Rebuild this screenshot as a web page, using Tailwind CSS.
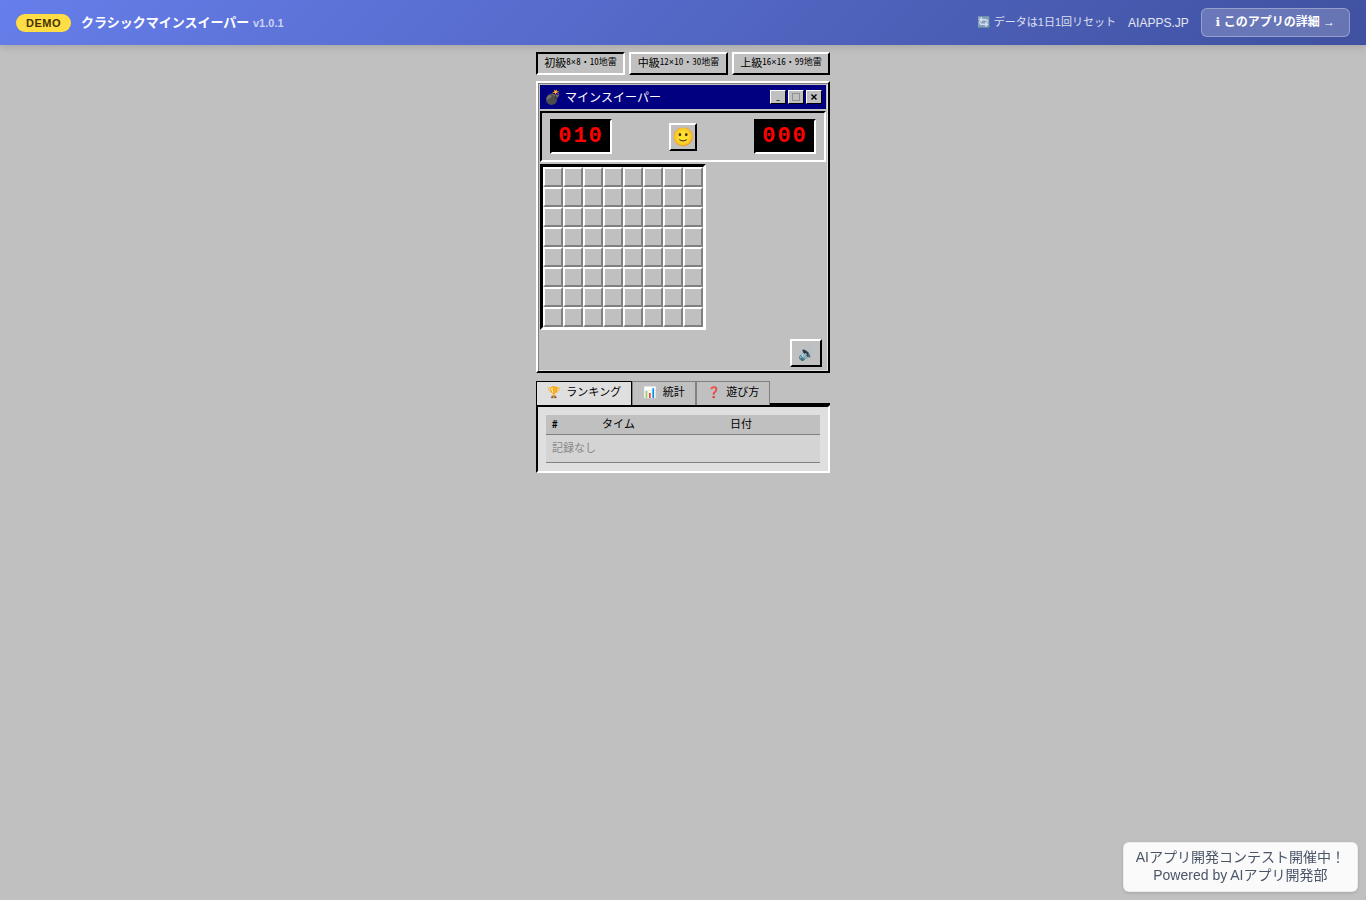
<!DOCTYPE html>
<html lang="ja">
<head>
  <meta charset="UTF-8">
  <meta name="viewport" content="width=device-width, initial-scale=1.0">
  <title>クラシックマインスイーパー</title>
  <script src="https://cdn.jsdelivr.net/npm/@tailwindcss/browser@4"></script>
</head>
<body class="min-h-screen bg-[#c0c0c0] text-black font-['Noto_Sans_Mono_CJK_JP','Noto_Sans_CJK_JP',monospace]">

  <header class="flex h-[45px] items-center justify-between bg-linear-135 from-[#667eea] to-[#4051a0] px-4 text-white shadow-[0_2px_8px_rgba(0,0,0,0.15)] font-['Liberation_Sans','Noto_Sans_CJK_JP',sans-serif]">
    <div class="flex items-center gap-[10px]">
      <span class="rounded-full bg-[#ffdd44] px-[10px] text-[11px] leading-[18px] font-bold tracking-[0.5px] text-[#443300]">DEMO</span>
      <h1 class="text-[13px] font-bold">クラシックマインスイーパー <span class="text-[11px] text-white/70">v1.0.1</span></h1>
    </div>
    <div class="flex items-center gap-3">
      <span class="text-[11px] opacity-80">🔄 データは1日1回リセット</span>
      <a href="#" class="text-xs text-white/85">AIAPPS.JP</a>
      <a href="#" class="rounded-md border border-white/30 bg-white/20 px-[14px] text-xs leading-[27px] font-bold"><span class="font-['DejaVu_Sans']">ℹ&#xFE0E;</span> このアプリの詳細 →</a>
    </div>
  </header>

  <main class="mx-auto w-[294px] pt-[7px]">
    <!-- 難易度 -->
    <div class="mb-[6px] flex gap-1">
      <button class="flex h-[23px] w-[89px] items-center justify-center border-2 border-t-black border-l-black border-r-white border-b-white pb-[2px] text-[11px] whitespace-nowrap">初級<span class="text-[9px]">8<span class="font-['Liberation_Sans']">×</span>8・10地雷</span></button>
      <button class="flex h-[23px] w-[99px] items-center justify-center border-2 border-t-white border-l-white border-r-black border-b-black pb-[2px] text-[11px] whitespace-nowrap">中級<span class="text-[9px]">12<span class="font-['Liberation_Sans']">×</span>10・30地雷</span></button>
      <button class="flex h-[23px] w-[98px] items-center justify-center border-2 border-t-white border-l-white border-r-black border-b-black pb-[2px] text-[11px] whitespace-nowrap">上級<span class="text-[9px]">16<span class="font-['Liberation_Sans']">×</span>16・99地雷</span></button>
    </div>

    <!-- ゲームウィンドウ -->
    <section class="border-2 border-t-white border-l-white border-r-black border-b-black p-[2px] shadow-[inset_1px_1px_0_#808080,inset_-1px_-1px_0_#dfdfdf]">
      <div class="mb-[2px] flex h-6 items-center justify-between bg-[#000080] px-1 text-white">
        <h2 class="flex items-center gap-1 pb-px text-xs"><span class="text-sm leading-none font-['Liberation_Sans']">💣</span>マインスイーパー</h2>
        <div class="flex gap-[2px] text-[8px] leading-none font-bold text-black">
          <button class="flex h-[14px] w-4 items-center justify-center border border-t-white border-l-white border-r-black border-b-black bg-[#c0c0c0]" aria-label="最小化">_</button>
          <button class="flex h-[14px] w-4 items-center justify-center border border-t-white border-l-white border-r-black border-b-black bg-[#c0c0c0]" aria-label="最大化"><span class="size-2 border border-[#909090]"></span></button>
          <button class="flex h-[14px] w-4 items-center justify-center border border-t-white border-l-white border-r-black border-b-black bg-[#c0c0c0]" aria-label="閉じる">
            <svg class="size-[6px]" viewBox="0 0 6 6" fill="none" stroke="currentColor" stroke-width="1.4"><path d="M.5.5l5 5M5.5.5l-5 5"/></svg>
          </button>
        </div>
      </div>

      <div class="mb-[2px] flex h-[51px] items-center justify-between border-2 border-t-black border-l-black border-r-white border-b-white px-2">
        <div class="flex h-[35px] w-[62px] justify-center border-2 border-t-black border-l-black border-r-white border-b-white bg-black text-[22px] leading-8 font-bold tracking-[2px] text-[#ff0000] font-['Liberation_Mono',monospace]">010</div>
        <button class="flex size-7 items-center justify-center border-2 border-t-white border-l-white border-r-black border-b-black text-lg leading-none font-['Liberation_Sans']" aria-label="リセット">🙂</button>
        <div class="flex h-[35px] w-[62px] justify-center border-2 border-t-black border-l-black border-r-white border-b-white bg-black text-[22px] leading-8 font-bold tracking-[2px] text-[#ff0000] font-['Liberation_Mono',monospace]">000</div>
      </div>

      <div id="board" class="grid w-fit grid-cols-8 border-3 border-t-black border-l-black border-r-white border-b-white"></div>

      <div class="flex justify-end px-1 pt-[9px] pb-[2px]">
        <button class="flex h-7 w-8 items-center justify-center border-2 border-t-white border-l-white border-r-black border-b-black pb-px text-sm leading-none font-['Liberation_Sans']" aria-label="サウンド">🔊</button>
      </div>
    </section>

    <!-- タブ -->
    <div class="mt-2 flex h-6 border-b-2 border-black text-[11px]" role="tablist">
      <button class="h-6 w-24 border border-b-0 border-black bg-[#dfdfdf] pb-1" role="tab" aria-selected="true">🏆 ランキング</button>
      <button class="h-6 w-16 border border-b-0 border-[#808080] bg-[#c0c0c0] pb-1" role="tab">📊 統計</button>
      <button class="h-6 w-[74px] border border-b-0 border-[#808080] bg-[#c0c0c0] pb-1" role="tab">❓ 遊び方</button>
    </div>
    <div class="border-2 border-t-black border-l-black border-r-white border-b-white bg-[#dfdfdf] p-2">
      <table class="w-full text-left text-[11px]">
        <thead>
          <tr class="h-[19px] border-b border-[#808080] bg-[#c0c0c0] leading-4">
            <th class="w-[50px] px-[6px] pt-0 pb-[2px]">#</th>
            <th class="w-32 px-[6px] pt-0 pb-[2px] font-normal">タイム</th>
            <th class="px-[6px] pt-0 pb-[2px] font-normal">日付</th>
          </tr>
        </thead>
        <tbody>
          <tr class="h-7 border-b border-[#808080] bg-[#d4d4d4] leading-4">
            <td colspan="3" class="px-[6px] pt-0 pb-[2px] text-[#888]">記録なし</td>
          </tr>
        </tbody>
      </table>
    </div>
  </main>

  <a href="#" class="fixed right-2 bottom-2 rounded-md border border-black/5 bg-[#fafafa] px-3 pt-[5px] pb-[7px] text-center text-sm leading-[18px] text-[#4a5568] shadow-[0_1px_3px_rgba(0,0,0,0.15)] font-['Liberation_Sans','Noto_Sans_CJK_JP',sans-serif]">AIアプリ開発コンテスト開催中！<br>Powered by AIアプリ開発部</a>

  <script>
    const board = document.getElementById("board");
    for (let i = 0; i < 64; i++) {
      const cell = document.createElement("button");
      cell.className = "size-5 border-2 border-t-white border-l-white border-r-[#808080] border-b-[#808080] bg-[#c0c0c0]";
      cell.setAttribute("aria-label", `${Math.floor(i / 8) + 1}-${(i % 8) + 1}`);
      board.appendChild(cell);
    }
  </script>
</body>
</html>
